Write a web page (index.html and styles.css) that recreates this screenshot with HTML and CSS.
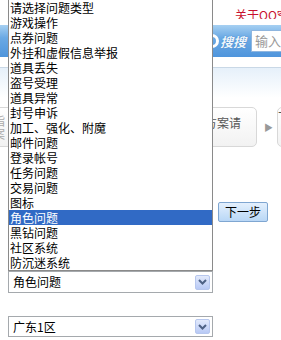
FILE: index.html
```html
<!DOCTYPE html>
<html lang="zh-CN">
<head>
<meta charset="utf-8">
<title>问题类型</title>
<link rel="stylesheet" href="styles.css">
</head>
<body>
<div class="page">
  <div class="top"><a class="top-link">关于QQ空间</a></div>
  <div class="search">
    <span class="logo-ring"></span>
    <span class="logo-text">搜搜</span>
    <div class="search-input">输入搜索内容</div>
  </div>
  <div class="gap"></div>
  <div class="nav"></div>
  <div class="steps">
    <div class="step step-left">提交指<br>查看答案</div>
    <div class="step step-mid">解决方案请</div>
    <span class="step-arrow">&#9654;</span>
    <div class="step step-right">下一步</div>
  </div>
  <div class="btn-row"><button class="next-btn">下一步</button></div>
  <div class="select sel-first">
    <span class="select-text">角色问题</span>
    <span class="select-arrow"><svg width="9" height="6" viewBox="0 0 9 6"><path d="M1 1 L4.5 4.5 L8 1" fill="none" stroke="#4d6185" stroke-width="2"/></svg></span>
  </div>
  <div class="select sel-second">
    <span class="select-text">广东1区</span>
    <span class="select-arrow"><svg width="9" height="6" viewBox="0 0 9 6"><path d="M1 1 L4.5 4.5 L8 1" fill="none" stroke="#4d6185" stroke-width="2"/></svg></span>
  </div>
</div>
<ul class="dropdown">
  <li>请选择问题类型</li>
  <li>游戏操作</li>
  <li>点券问题</li>
  <li>外挂和虚假信息举报</li>
  <li>道具丢失</li>
  <li>盗号受理</li>
  <li>道具异常</li>
  <li>封号申诉</li>
  <li>加工、强化、附魔</li>
  <li>邮件问题</li>
  <li>登录帐号</li>
  <li>任务问题</li>
  <li>交易问题</li>
  <li>图标</li>
  <li class="selected">角色问题</li>
  <li>黑钻问题</li>
  <li>社区系统</li>
  <li>防沉迷系统</li>
</ul>
</body>
</html>
```
FILE: styles.css
```css
html, body {
  margin: 0;
  padding: 0;
}
body {
  width: 281px;
  height: 340px;
  overflow: hidden;
  position: relative;
  background: #fff;
  font-family: "Noto Sans CJK SC", "Liberation Sans", sans-serif;
  font-size: 12px;
  color: #000;
}
.page {
  width: 281px;
}
.top {
  height: 25px;
  padding-left: 235px;
  white-space: nowrap;
}
.top-link {
  display: block;
  height: 19px;
  box-sizing: border-box;
  padding-top: 8px;
  line-height: 14px;
  overflow: hidden;
  color: #c8102e;
}
.search {
  height: 32px;
  background: linear-gradient(#a6d0f2 0%, #6aa9e4 40%, #4f95dc 100%);
  display: flex;
  align-items: center;
  white-space: nowrap;
}
.logo-ring {
  margin-left: 205px;
  width: 8px;
  height: 8px;
  border: 3px solid #fff;
  border-radius: 50%;
  flex: none;
}
.logo-text {
  margin-left: 1px;
  color: #eef6fd;
  font-weight: bold;
  font-style: italic;
  font-size: 13px;
  text-shadow: 0 0 1px #2a6cb5;
  flex: none;
}
.search-input {
  margin-left: 5px;
  height: 22px;
  flex: none;
  width: 80px;
  box-sizing: border-box;
  background: #fff;
  border: 1px solid #8fb6df;
  border-right: 0;
  padding-left: 3px;
  line-height: 20px;
  font-size: 13px;
  color: #999;
}
.gap {
  height: 10px;
}
.nav {
  height: 30px;
  border-top: 1px solid #c9d8e6;
  background: linear-gradient(#e6f0fa, #ffffff);
}
.steps {
  margin-top: 9px;
  height: 40px;
  display: flex;
  align-items: flex-start;
  white-space: nowrap;
}
.step {
  height: 40px;
  box-sizing: border-box;
  border: 1px solid #d8d8d8;
  border-radius: 5px;
  background: linear-gradient(#ffffff, #f2f2f2);
  color: #555;
  flex: none;
}
.step-left {
  margin-left: -52px;
  width: 66px;
  text-align: right;
  padding: 6px 8px 0 0;
  line-height: 13px;
  color: #aaa;
}
.step-mid {
  margin-left: 156px;
  width: 87px;
  padding: 8px 0 0 10px;
  line-height: 14px;
}
.step-arrow {
  margin: 16px 0 0 7px;
  font-size: 9px;
  line-height: 9px;
  color: #999;
  flex: none;
}
.step-right {
  margin-left: 4px;
  width: 60px;
}
.btn-row {
  margin-top: 55px;
  padding-left: 218px;
  height: 20px;
}
.next-btn {
  display: block;
  width: 50px;
  height: 20px;
  padding: 0;
  margin: 0;
  border: 1px solid #7fa6d1;
  border-radius: 2px;
  background: linear-gradient(#e4f0fd, #b9d7f6);
  font-family: "Noto Sans CJK SC", sans-serif;
  font-size: 12px;
  line-height: 18px;
  color: #000;
}
.select {
  margin-left: 8px;
  width: 205px;
  box-sizing: border-box;
  border: 1px solid #a5a9ad;
  display: flex;
  align-items: center;
  justify-content: space-between;
  padding: 0 2px 0 4px;
  background: #fff;
}
.sel-first {
  margin-top: 49px;
  height: 22px;
}
.sel-second {
  margin-top: 23px;
  height: 21px;
}
.select-text {
  line-height: 16px;
}
.select-arrow {
  width: 15px;
  height: 15px;
  box-sizing: border-box;
  border: 1px solid #b7c7ee;
  border-radius: 2px;
  background: linear-gradient(#e2eafc, #b8c9f5);
  display: flex;
  align-items: center;
  justify-content: center;
}
.dropdown {
  position: absolute;
  left: 8px;
  top: -1px;
  width: 205px;
  box-sizing: border-box;
  margin: 0;
  padding: 0;
  list-style: none;
  border: 1px solid #8a8a8a;
  background: #fff;
}
.dropdown li {
  height: 15px;
  line-height: 15px;
  padding-left: 1px;
  white-space: nowrap;
  color: #000;
}
.dropdown li.selected {
  background: #316ac5;
  color: #fff;
}
```
